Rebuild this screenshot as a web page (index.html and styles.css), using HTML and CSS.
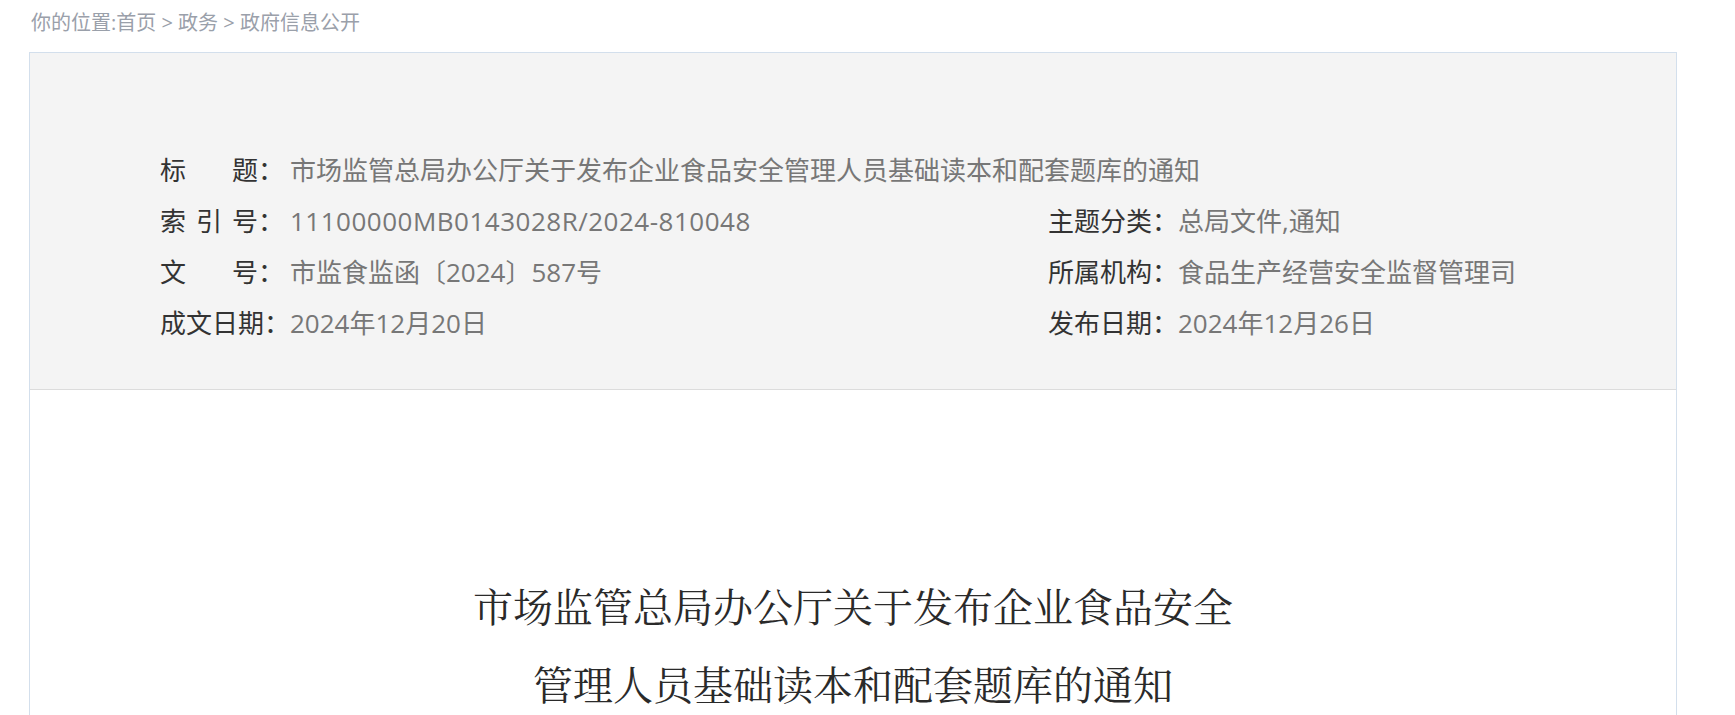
FILE: index.html
```html
<!DOCTYPE html>
<html lang="zh-CN">
<head>
    <meta charset="UTF-8">
    <meta name="viewport" content="width=device-width, initial-scale=1.0">
    <title>政府信息公开</title>
    <link rel="stylesheet" href="styles.css">
</head>
<body>
    <div class="crumb">你的位置:<a href="#">首页</a> &gt; <a href="#">政务</a> &gt; <a href="#">政府信息公开</a></div>

    <div class="article">
        <div class="meta">
            <div class="meta_row full">
                <span class="lab"><b>标题</b>：</span>
                <span class="val">市场监管总局办公厅关于发布企业食品安全管理人员基础读本和配套题库的通知</span>
            </div>
            <div class="meta_row">
                <span class="lab"><b>索引号</b>：</span>
                <span class="val code">11100000MB0143028R/2024-810048</span>
            </div>
            <div class="meta_row right">
                <span class="lab"><b>主题分类</b>：</span>
                <span class="val">总局文件,通知</span>
            </div>
            <div class="meta_row">
                <span class="lab"><b>文号</b>：</span>
                <span class="val">市监食监函〔2024〕587号</span>
            </div>
            <div class="meta_row right">
                <span class="lab"><b>所属机构</b>：</span>
                <span class="val">食品生产经营安全监督管理司</span>
            </div>
            <div class="meta_row four">
                <span class="lab"><b>成文日期</b>：</span>
                <span class="val">2024年12月20日</span>
            </div>
            <div class="meta_row right">
                <span class="lab"><b>发布日期</b>：</span>
                <span class="val">2024年12月26日</span>
            </div>
        </div>

        <div class="content">
            <h1 class="art_title">市场监管总局办公厅关于发布企业食品安全<br>管理人员基础读本和配套题库的通知</h1>
        </div>
    </div>
</body>
</html>
```

FILE: styles.css
```css
body { margin:0; background:#fff; font-family:"Open Sans", "Noto Sans CJK SC", "Microsoft YaHei", sans-serif; color:#333; }

.crumb { padding:8px 0 0 31px; height:52px; box-sizing:border-box; font-size:20px; line-height:30px; color:#9aa0aa; }
.crumb a { color:#9aa0aa; text-decoration:none; }

.article { margin-left:29px; width:1648px; border:1px solid #d3dfec; border-bottom:0; min-height:663px; box-sizing:border-box; }

.meta { display:grid; grid-template-columns:888px 1fr; padding:92px 0 40px 130px; background:#f4f4f4; border-bottom:1px solid #dcdcdc; font-size:26px; line-height:51px; }
.meta_row { display:flex; white-space:nowrap; }
.meta_row.full { grid-column:1 / 3; }
.lab { flex:none; width:130px; color:#333; }
.lab b { display:inline-block; width:98px; font-weight:normal; text-align:justify; text-align-last:justify; vertical-align:top; }
.meta_row.four .lab b, .meta_row.right .lab b { width:104px; }
.val { color:#777; }
.val.code { letter-spacing:0.5px; }

.content { padding:176px 0 0; }
.art_title { margin:0; text-align:center; font-family:"Noto Serif CJK SC", "Source Han Serif SC", "SimSun", "Liberation Serif", serif; font-size:40px; font-weight:normal; line-height:78px; color:#2a2a2a; }
```
